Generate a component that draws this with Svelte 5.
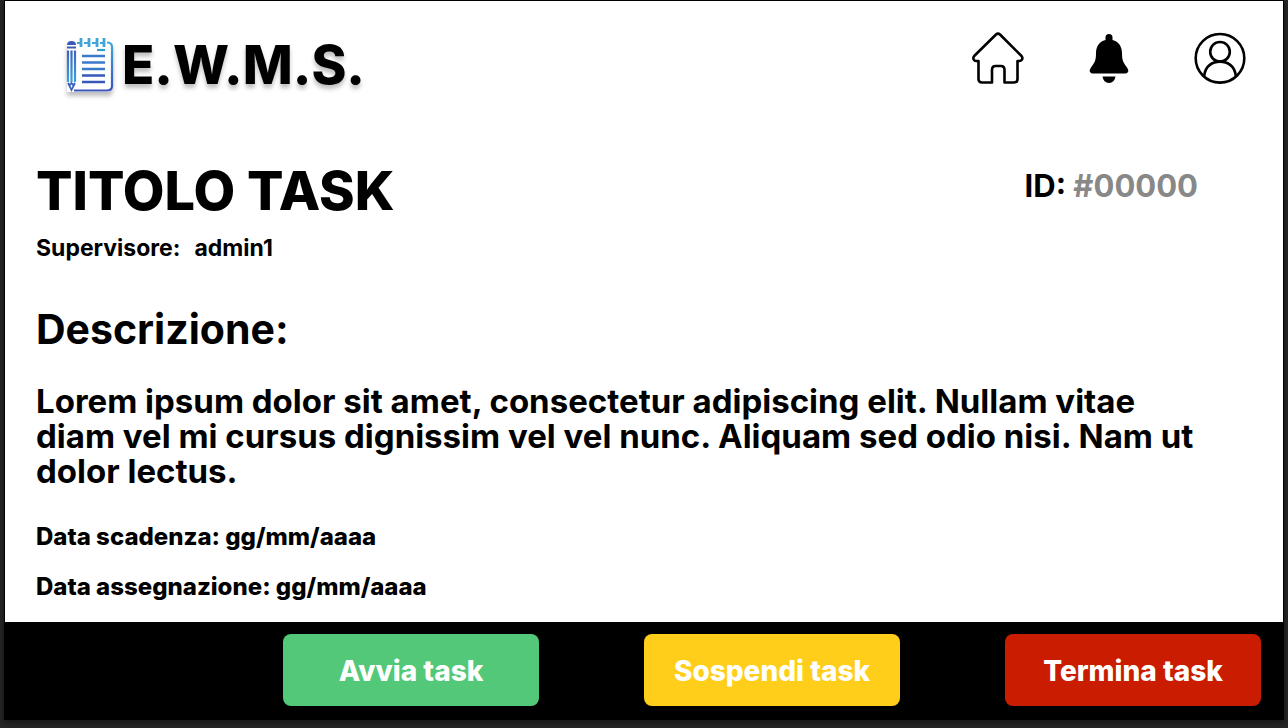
<script>
  const task = {
    title: 'TITOLO TASK',
    id: '#00000',
    supervisor: 'admin1',
    description:
      'Lorem ipsum dolor sit amet, consectetur adipiscing elit. Nullam vitae diam vel mi cursus dignissim vel vel nunc. Aliquam sed odio nisi. Nam ut dolor lectus.',
    due: 'gg/mm/aaaa',
    assigned: 'gg/mm/aaaa'
  };
  const actions = [
    { label: 'Avvia task', kind: 'start' },
    { label: 'Sospendi task', kind: 'pause' },
    { label: 'Termina task', kind: 'stop' }
  ];
</script>

<div class="desk">
  <div class="window">
    <header>
      <a class="brand" href="#home">
        <svg class="notebook" width="48" height="56" viewBox="0 0 48 56" fill="none" aria-hidden="true">
          <defs>
            <linearGradient id="ink" x1="0" y1="0" x2="0" y2="56" gradientUnits="userSpaceOnUse">
              <stop offset="0" stop-color="#3fb0dc" />
              <stop offset="1" stop-color="#3a50b8" />
            </linearGradient>
            <linearGradient id="pencil" x1="0" y1="4" x2="0" y2="54" gradientUnits="userSpaceOnUse">
              <stop offset="0" stop-color="#3a4fb8" />
              <stop offset="1" stop-color="#3fb4e2" />
            </linearGradient>
          </defs>
          <path d="M1 4H9V2H42Q46 4 46 8V51Q46 55 42 55H1Z" fill="#fff" />
          <path d="M11 6H15M18 6H23M26 6H31M34 6H38M41 5.500Q46 5.500 46 10V49Q46 53.500 41 53.500H8" stroke="url(#ink)" stroke-width="2.200" />
          <path d="M15 1V10M23 1V10M31 1V10M38 1V10" stroke="#3fa5d7" stroke-width="2.800" />
          <path d="M31 13H39" stroke="#2f9ed0" stroke-width="2.200" />
          <path d="M16 19H39M16 25.500H39M16 32H39" stroke="#397bca" stroke-width="2.400" />
          <path d="M16 38.500H39M16 45H39" stroke="#3658bb" stroke-width="2.400" />
          <path d="M1 8Q1 4 5.500 4T10 8Z" fill="#3a59ba" />
          <path d="M1 10.500H10" stroke="#3a59ba" stroke-width="2" />
          <path d="M2 13.500V45M5.500 13.500V45M9 13.500V45" stroke="url(#pencil)" stroke-width="2.200" />
          <path d="M2 46L5.500 53L9 46L7 48L5.500 46L4 48Z" stroke="#3a64c0" stroke-width="1.700" />
        </svg>
        <span>E.W.M.S.</span>
      </a>
      <nav>
        <a href="#home" aria-label="Home">
          <svg width="52" height="52" viewBox="0 0 52 52" fill="none" stroke="#000" stroke-width="2.600" stroke-linejoin="round">
            <path d="M24 2.500Q26 .800 28 2.500L49.500 24Q51 26 50 27.500Q49 29 47.500 29H45.500V47Q45.500 50.500 42 50.500H32.500V38Q32.500 34 29 34H23.500Q20 34 20 38V50.500H10Q6.500 50.500 6.500 47V29H4Q2.500 29 1.700 27.500Q.900 25.500 2.200 24Z" />
          </svg>
        </a>
        <a href="#notifiche" aria-label="Notifiche">
          <svg width="52" height="52" viewBox="0 0 52 52">
            <path d="M22.500 8V5.500A3.500 3.500 0 0 1 29.500 5.500V8C36 9.500 39 15 39 21C39 29 40.500 30.500 44 35.500Q46 38.500 45 40Q44 41.500 42 41.500H10Q8 41.500 7 40Q6 38.500 8 35.500C11.500 30.500 13 29 13 21C13 15 16 9.500 22.500 8Z" />
            <path d="M19.500 44.500H32.500Q31.500 51 26 51T19.500 44.500Z" />
          </svg>
        </a>
        <a href="#profilo" aria-label="Profilo">
          <svg width="52" height="52" viewBox="0 0 52 52" fill="none" stroke="#000" stroke-width="2.600">
            <circle cx="26" cy="26.300" r="24.300" />
            <circle cx="26" cy="19.800" r="9.800" />
            <path d="M10 44.500Q11 36.500 15.500 33.100Q20 29.600 26 29.600T36.500 33.100Q41 36.500 42 44.500" />
          </svg>
        </a>
      </nav>
    </header>

    <main>
      <div class="heading">
        <h1>{task.title}</h1>
        <p class="ident">ID: <span>{task.id}</span></p>
      </div>
      <p class="supervisor"><span>Supervisore:</span><span>{task.supervisor}</span></p>
      <h2>Descrizione:</h2>
      <p class="description">{task.description}</p>
      <p class="date">Data scadenza: {task.due}</p>
      <p class="date">Data assegnazione: {task.assigned}</p>
    </main>

    <footer>
      {#each actions as action}
        <button type="button" class={action.kind}>{action.label}</button>
      {/each}
    </footer>
  </div>
</div>

<style>
  :global(body) {
    margin: 0;
    background: #262626;
  }
  .desk {
    box-sizing: border-box;
    min-height: 100vh;
    display: flex;
    padding: 0 4px 8px;
    font-family: Inter, 'Liberation Sans', sans-serif;
    font-weight: 700;
    color: #000;
  }
  .window {
    flex: 1;
    display: flex;
    flex-direction: column;
    border: 1px solid #000;
    border-bottom: 0;
    background: #fff;
    box-shadow: 0 2px 6px rgba(0, 0, 0, 0.5);
  }
  header {
    display: flex;
    justify-content: space-between;
    align-items: center;
    padding: 24px 37px 0 61px;
  }
  .brand {
    display: flex;
    align-items: center;
    gap: 8px;
    color: #000;
    text-decoration: none;
    font-size: 53px;
    line-height: 80px;
    font-weight: 800;
    filter: drop-shadow(0 4px 2px rgba(0, 0, 0, 0.25));
  }
  nav {
    display: flex;
    gap: 59px;
    padding-bottom: 14px;
  }
  nav a,
  nav svg {
    display: block;
  }
  h1,
  h2,
  p {
    margin: 0;
  }
  main {
    flex: 1;
    padding: 52px 64px 16px 31px;
  }
  .heading {
    display: flex;
    justify-content: space-between;
    padding-right: 21px;
  }
  h1 {
    font-size: 54px;
    line-height: 68px;
    font-weight: 800;
  }
  .ident {
    font-size: 31px;
    line-height: 58px;
  }
  .ident span {
    color: #888;
  }
  .supervisor {
    display: flex;
    gap: 14px;
    margin-top: 9px;
    font-size: 23px;
    line-height: 28px;
  }
  h2 {
    margin-top: 43px;
    font-size: 41px;
    line-height: 48px;
  }
  .description {
    max-width: 1170px;
    margin-top: 31px;
    font-size: 33px;
    line-height: 35px;
  }
  .date {
    margin-top: 22px;
    font-size: 24px;
    line-height: 28px;
    font-weight: 800;
  }
  .description + .date {
    margin-top: 34px;
  }
  footer {
    display: flex;
    justify-content: flex-end;
    gap: 105px;
    padding: 12px 22px 14px;
    background: #000;
  }
  button {
    width: 256px;
    height: 72px;
    padding: 2px 0 0;
    border: 0;
    border-radius: 8px;
    color: #fff;
    font: inherit;
    font-size: 28px;
    font-weight: 800;
    cursor: pointer;
  }
  .start {
    background: #52c878;
  }
  .pause {
    background: #ffce1b;
  }
  .stop {
    background: #c91c00;
  }
</style>
